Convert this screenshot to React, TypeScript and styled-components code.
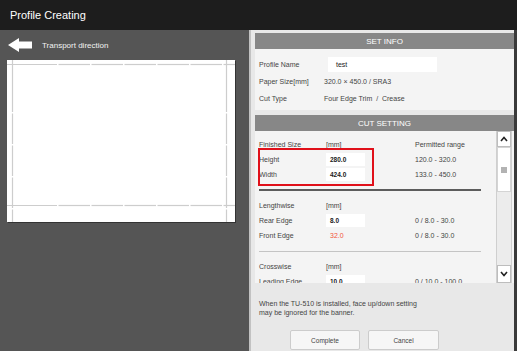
import React from "react";
import styled, { createGlobalStyle } from "styled-components";

const Global = createGlobalStyle`
  html, body { margin: 0; padding: 0; background: #555555; }
  body { font-family: "Liberation Sans", Arial, sans-serif; }
  * { box-sizing: border-box; }
`;

const Screen = styled.div`
  width: 517px;
  height: 351px;
  display: flex;
  flex-direction: column;
  overflow: hidden;
  background: #555555;
`;

const Header = styled.div`
  height: 30px;
  flex: none;
  background: #1d1d1d;
  color: #ffffff;
  font-size: 11px;
  padding-left: 10px;
  display: flex;
  align-items: center;
`;

const Main = styled.div`
  flex: 1;
  display: flex;
  min-height: 0;
`;

const LeftPane = styled.div`
  width: 249px;
  flex: none;
  display: flex;
  flex-direction: column;
  padding: 8px 0 0 8px;
`;

const Direction = styled.div`
  height: 14px;
  display: flex;
  align-items: center;
  gap: 10px;
  color: #f2f2f2;
  font-size: 8px;
`;

const Sheet = styled.div`
  margin: 8px 0 0 -1px;
  width: 228px;
  height: 162px;
  background: #ffffff;
  box-shadow: 1px 1px 0 #333333;
`;

const RightPane = styled.div`
  width: 268px;
  flex: none;
  background: #e8e8e8;
  border-left: 2px solid #c2c2c2;
  border-right: 3px solid #3a3a3a;
  display: flex;
  flex-direction: column;
  padding: 3px 0 0 4px;
`;

const SectionBar = styled.div`
  height: 16px;
  flex: none;
  background: #878787;
  color: #ffffff;
  font-size: 8px;
  display: flex;
  align-items: center;
  justify-content: center;
`;

const InfoBody = styled.div`
  background: #f4f4f4;
  height: 61px;
  padding: 8px 0 0 4px;
  display: flex;
  flex-direction: column;
`;

const InfoRow = styled.div<{ $h: number }>`
  height: ${(p) => p.$h}px;
  display: grid;
  grid-template-columns: 65px 1fr;
  align-items: center;
  font-size: 7px;
  color: #444444;
`;

const NameInput = styled.div`
  margin-left: 4px;
  width: 109px;
  height: 15px;
  background: #ffffff;
  padding-left: 8px;
  display: flex;
  align-items: center;
  color: #222222;
`;

const Value = styled.span`
  color: #444444;
`;

const Gap = styled.div<{ $h: number }>`
  height: ${(p) => p.$h}px;
  flex: none;
`;

const ScrollArea = styled.div`
  height: 152px;
  flex: none;
  display: flex;
  background: #f4f4f4;
  overflow: hidden;
`;

const ScrollContent = styled.div`
  width: 241px;
  padding: 6px 0 0 4px;
  display: flex;
  flex-direction: column;
`;

const Row = styled.div`
  height: 15px;
  flex: none;
  display: grid;
  grid-template-columns: 67px 89px 1fr;
  align-items: center;
  font-size: 7px;
  color: #444444;
`;

const Field = styled.div`
  width: 39px;
  height: 13px;
  background: #ffffff;
  padding-left: 4px;
  display: flex;
  align-items: center;
  color: #1a1a1a;
  font-weight: bold;
  font-size: 6.5px;
`;

const Plain = styled.span<{ $warn?: boolean }>`
  color: ${(p) => (p.$warn ? "#f2563a" : "#444444")};
  padding-left: ${(p) => (p.$warn ? "4px" : "0")};
`;

const Group = styled.div`
  position: relative;
  display: flex;
  flex-direction: column;
`;

const Highlight = styled.div`
  position: absolute;
  left: -1px;
  top: -4px;
  width: 116px;
  height: 38px;
  border: 2px solid #e0101a;
  pointer-events: none;
`;

const Divider = styled.div<{ $thick?: boolean }>`
  width: 222px;
  flex: none;
  height: ${(p) => (p.$thick ? "2px" : "1px")};
  background: ${(p) => (p.$thick ? "#5c5c5c" : "#c4c4c4")};
  margin: ${(p) => (p.$thick ? "7px 0 7px" : "8px 0 7px")};
`;

const ScrollBar = styled.div`
  width: 16px;
  display: flex;
  flex-direction: column;
  background: #ececec;
  border-left: 1px solid #cfcfcf;
  border-right: 1px solid #cfcfcf;
`;

const ScrollButton = styled.div<{ $h: number }>`
  height: ${(p) => p.$h}px;
  flex: none;
  background: #ffffff;
  border: 1px solid #bdbdbd;
  display: flex;
  align-items: center;
  justify-content: center;
`;

const Thumb = styled.div`
  height: 45px;
  flex: none;
  background: #ffffff;
  border: 1px solid #d4d4d4;
  display: flex;
  align-items: center;
  justify-content: center;
`;

const Track = styled.div`
  flex: 1;
`;

const Footer = styled.div`
  flex: 1;
  padding: 16px 0 0 4px;
  display: flex;
  flex-direction: column;
`;

const Note = styled.p`
  margin: 0;
  font-size: 7px;
  line-height: 9px;
  color: #444444;
`;

const Buttons = styled.div`
  display: flex;
  gap: 8px;
  margin: 13px 0 0 31px;
`;

const Button = styled.div<{ $w: number }>`
  width: ${(p) => p.$w}px;
  height: 20px;
  background: #f6f6f6;
  border: 1px solid #cccccc;
  border-radius: 2px;
  display: flex;
  align-items: center;
  justify-content: center;
  font-size: 6.5px;
  color: #444444;
`;

const Arrow = () => (
  <svg width="24" height="14" viewBox="0 0 24 14">
    <polygon points="0,7 11,0 11,3.5 24,3.5 24,10.5 11,10.5 11,14" fill="#ffffff" />
  </svg>
);

const dashSegs = (len: number, start: number, period: number) => {
  const segs: [number, number][] = [];
  let a = 0;
  let b = start;
  while (a < len) {
    segs.push([a, Math.min(b, len)]);
    a = b + 1.5;
    b = a + period - 1.5;
  }
  return segs;
};

const SheetDrawing = () => {
  const h = dashSegs(228, 50, 33);
  const v = dashSegs(162, 52, 32);
  const stroke = "#cdcdcd";
  return (
    <svg width="228" height="162" viewBox="0 0 228 162">
      {h.map(([a, b], i) => (
        <g key={"h" + i}>
          <line x1={a} x2={b} y1={4.5} y2={4.5} stroke={stroke} strokeWidth={1.2} />
          <line x1={a} x2={b} y1={145.5} y2={145.5} stroke={stroke} strokeWidth={1.2} />
        </g>
      ))}
      {v.map(([a, b], i) => (
        <g key={"v" + i}>
          <line x1={5.5} x2={5.5} y1={a} y2={b} stroke={stroke} strokeWidth={1.2} />
          <line x1={219.5} x2={219.5} y1={a} y2={b} stroke={stroke} strokeWidth={1.2} />
        </g>
      ))}
    </svg>
  );
};

const Chevron = ({ up }: { up?: boolean }) => (
  <svg width="8" height="6" viewBox="0 0 8 6">
    <polyline
      points={up ? "1,5 4,1.5 7,5" : "1,1 4,4.5 7,1"}
      fill="none"
      stroke="#222222"
      strokeWidth="1.6"
    />
  </svg>
);

const Grip = () => (
  <svg width="6" height="6" viewBox="0 0 6 6">
    <line x1="0" x2="6" y1="1" y2="1" stroke="#555" strokeWidth="0.9" />
    <line x1="0" x2="6" y1="3" y2="3" stroke="#555" strokeWidth="0.9" />
    <line x1="0" x2="6" y1="5" y2="5" stroke="#555" strokeWidth="0.9" />
  </svg>
);

export default function App() {
  return (
    <Screen>
      <Global />
      <Header>Profile Creating</Header>
      <Main>
        <LeftPane>
          <Direction>
            <Arrow />
            <span>Transport direction</span>
          </Direction>
          <Sheet>
            <SheetDrawing />
          </Sheet>
        </LeftPane>
        <RightPane>
          <SectionBar>SET INFO</SectionBar>
          <InfoBody>
            <InfoRow $h={15}>
              <span>Profile Name</span>
              <NameInput>test</NameInput>
            </InfoRow>
            <InfoRow $h={18}>
              <span>Paper Size[mm]</span>
              <Value>320.0 × 450.0 / SRA3</Value>
            </InfoRow>
            <InfoRow $h={17}>
              <span>Cut Type</span>
              <Value>Four Edge Trim &nbsp;/ &nbsp;Crease</Value>
            </InfoRow>
          </InfoBody>
          <Gap $h={5} />
          <SectionBar>CUT SETTING</SectionBar>
          <ScrollArea>
            <ScrollContent>
              <Row>
                <span>Finished Size</span>
                <span>[mm]</span>
                <span>Permitted range</span>
              </Row>
              <Group>
                <Row>
                  <span>Height</span>
                  <Field>280.0</Field>
                  <span>120.0 - 320.0</span>
                </Row>
                <Row>
                  <span>Width</span>
                  <Field>424.0</Field>
                  <span>133.0 - 450.0</span>
                </Row>
                <Highlight />
              </Group>
              <Divider $thick />
              <Row>
                <span>Lengthwise</span>
                <span>[mm]</span>
                <span />
              </Row>
              <Row>
                <span>Rear Edge</span>
                <Field>8.0</Field>
                <span>0 / 8.0 - 30.0</span>
              </Row>
              <Row>
                <span>Front Edge</span>
                <Plain $warn>32.0</Plain>
                <span>0 / 8.0 - 30.0</span>
              </Row>
              <Divider />
              <Row>
                <span>Crosswise</span>
                <span>[mm]</span>
                <span />
              </Row>
              <Row>
                <span>Leading Edge</span>
                <Field>10.0</Field>
                <span>0 / 10.0 - 100.0</span>
              </Row>
            </ScrollContent>
            <ScrollBar>
              <ScrollButton $h={16}>
                <Chevron up />
              </ScrollButton>
              <Thumb>
                <Grip />
              </Thumb>
              <Track />
              <ScrollButton $h={18}>
                <Chevron />
              </ScrollButton>
            </ScrollBar>
          </ScrollArea>
          <Footer>
            <Note>
              When the TU-510 is installed, face up/down setting
              <br />
              may be ignored for the banner.
            </Note>
            <Buttons>
              <Button $w={70}>Complete</Button>
              <Button $w={71}>Cancel</Button>
            </Buttons>
          </Footer>
        </RightPane>
      </Main>
    </Screen>
  );
}
